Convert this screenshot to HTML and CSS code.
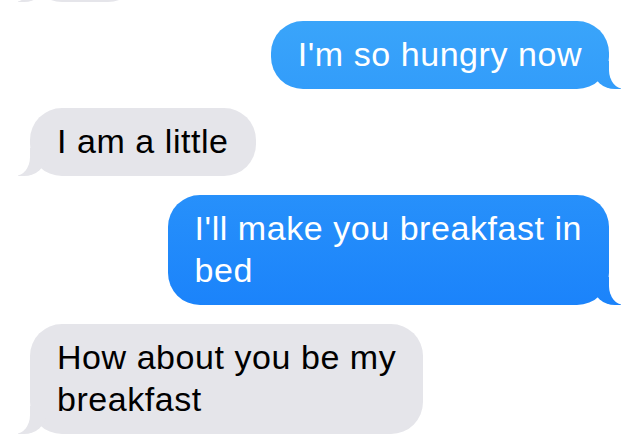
FILE: index.html
```html
<!DOCTYPE html>
<html>
<head>
    <meta charset="UTF-8">
    <title>Messages</title>
    <link rel="stylesheet" href="styles.css">
</head>
<body>
<div class="thread">
    <!-- bottom edge of the previous message, scrolled off the top -->
    <div class="msg in">
        <div class="bubble earlier"></div>
    </div>
    <div class="msg out">
        <div class="bubble">I'm so hungry now</div>
    </div>
    <div class="msg in">
        <div class="bubble">I am a little</div>
    </div>
    <div class="msg out">
        <div class="bubble">I'll make you breakfast in<br>bed</div>
    </div>
    <div class="msg in">
        <div class="bubble">How about you be my<br>breakfast</div>
    </div>
</div>
</body>
</html>
```

FILE: styles.css
```css
body {
    background-color: #fff;
    margin: 0;
    padding: 0;
    overflow: hidden;
    font-family: "Liberation Sans", Arial, sans-serif;
}

.thread {
    display: flex;
    flex-direction: column;
    gap: 19px;
    padding: 0 31px 0 30px;
}

.msg {
    display: flex;
}

.msg.out {
    justify-content: flex-end;
}

.bubble {
    position: relative;
    font-size: 34px;
    letter-spacing: 0.55px;
    line-height: 42px;
    padding: 12px 27px 14px 27px;
    border-radius: 32px;
    white-space: nowrap;
}

.bubble::before,
.bubble::after {
    content: "";
    position: absolute;
    bottom: 0;
}

/* sent: blue, the gradient is tied to the screen like iOS 7 */
.out .bubble {
    color: #fff;
    background: linear-gradient(#3ca7fa, #0d74fb) fixed;
}

.out .bubble::before {
    right: -12px;
    width: 28px;
    height: 28px;
    background: linear-gradient(#3ca7fa, #0d74fb) fixed;
    border-bottom-left-radius: 22px 20px;
}

.out .bubble::after {
    right: -15px;
    width: 15px;
    height: 30px;
    background: #fff;
    border-bottom-left-radius: 15px 19px;
}

/* received: grey */
.in .bubble {
    color: #000;
    background: #e5e5ea;
}

.in .bubble::before {
    left: -12px;
    width: 28px;
    height: 28px;
    background: #e5e5ea;
    border-bottom-right-radius: 22px 20px;
}

.in .bubble::after {
    left: -15px;
    width: 15px;
    height: 30px;
    background: #fff;
    border-bottom-right-radius: 15px 19px;
}

.bubble.earlier {
    width: 56px;
    height: 42px;
    margin-top: -66px;
}
```
